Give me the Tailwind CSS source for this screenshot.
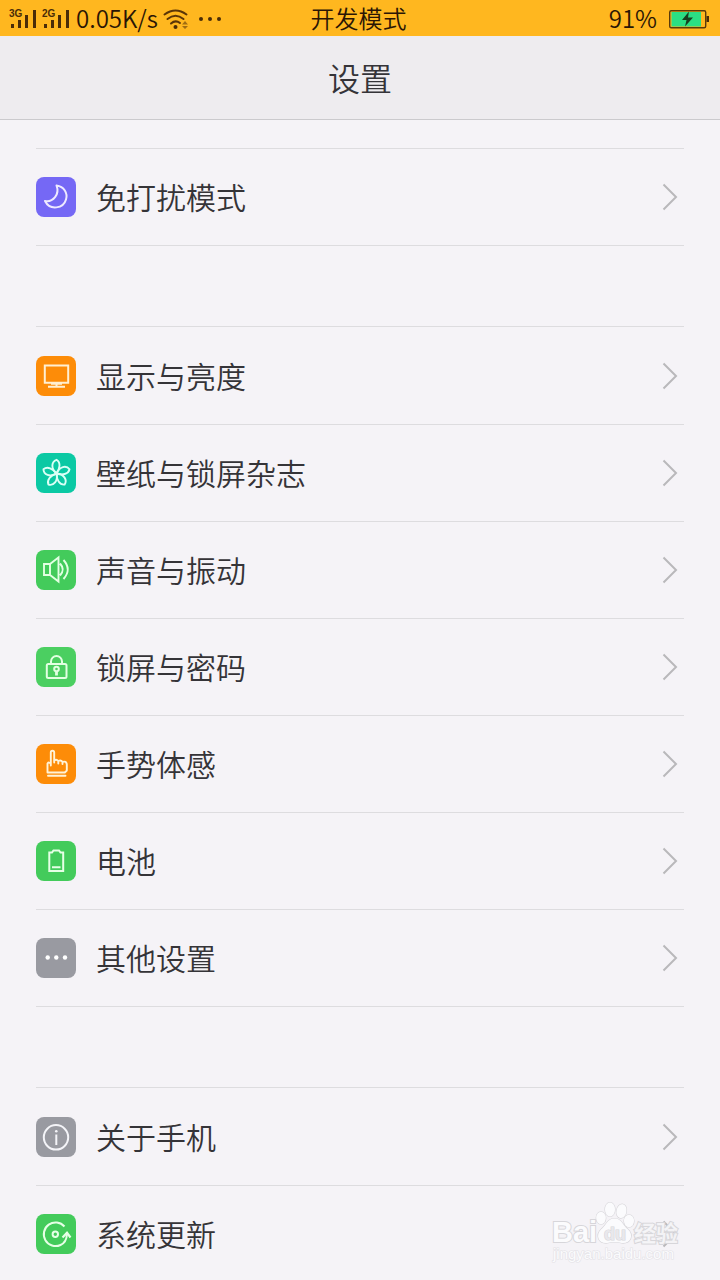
<!DOCTYPE html>
<html lang="zh-CN">
<head>
<meta charset="utf-8">
<meta name="viewport" content="width=device-width, initial-scale=1">
<title>设置</title>
<script src="https://cdn.jsdelivr.net/npm/@tailwindcss/browser@4"></script>
</head>
<body class="relative flex h-screen flex-col overflow-hidden bg-[#f5f3f7] font-['Noto_Sans_CJK_SC',sans-serif] font-[350] text-[#353438]">

<svg class="hidden">
  <symbol id="chevron" viewBox="0 0 16 28"><path d="M1.500 1.500L14 14L1.500 26.500" fill="none" stroke="#b9b8bb" stroke-width="2"/></symbol>
</svg>

<div class="grid h-9 shrink-0 grid-cols-3 items-center bg-[#ffb71f] pr-[11px] pl-2 text-2xl leading-9 text-[#2a1505]">
  <div class="flex items-center gap-1 whitespace-nowrap">
    <svg class="h-9 w-[62px] shrink-0" viewBox="8 0 62 36" fill="#4a2c08" role="img" aria-label="3G 2G">
      <g font-family="Liberation Sans, sans-serif" font-size="10" font-weight="700"><text x="9" y="16">3G</text><text x="42" y="16">2G</text></g>
      <path d="M11 23h3v4h-3zM18 19h3v8h-3zM25 14h3v13h-3zM33 9h3v18h-3zM44 23h3v4h-3zM51 19h3v8h-3zM58 14h3v13h-3zM66 9h3v18h-3z"/>
    </svg>
    <span class="ml-0.5 w-[83px] pb-0.5">0.05K/s</span>
    <svg class="h-9 w-[60px] shrink-0" viewBox="163 0 60 36" role="img" aria-label="Wi-Fi">
      <g fill="none" stroke="#5a3508" stroke-width="2" stroke-linecap="round"><path d="M164.500 13.500Q175.500 5.500 186.500 13.500"/><path d="M167.500 18Q175.500 11.500 183.500 18"/><path d="M171 22.500Q175.500 18.500 180 22"/></g>
      <circle cx="175.500" cy="26" r="2" fill="#4a2c08"/>
      <path d="M182 23.500l3-3.500 3 3.500zM182 25l3 3 3-3z" fill="#a06c12"/>
      <g fill="#4a2c08"><circle cx="201" cy="18" r="2"/><circle cx="210" cy="18" r="2"/><circle cx="219" cy="18" r="2"/></g>
    </svg>
  </div>
  <div class="pb-0.5 text-center">开发模式</div>
  <div class="flex items-center justify-end gap-3">
    <span class="pb-0.5">91%</span>
    <svg class="h-9 w-10" viewBox="669 0 40 36" role="img" aria-label="充电中">
      <rect x="669.700" y="9.700" width="36" height="17" rx="1.500" fill="none" stroke="#5a3a0a" stroke-width="1.400"/>
      <rect x="671.500" y="11" width="29.500" height="14.500" fill="#2bdf83"/>
      <path d="M706.500 15h2.500v6h-2.500z" fill="#4a2c08"/>
      <path d="M689 10.500l-7 8.500h4.500l-1.500 6.500 8-9h-5z" fill="#17401f"/>
    </svg>
  </div>
</div>

<header class="flex h-21 shrink-0 items-center justify-center border-b border-[#cbcacd] bg-[#eeecef]">
  <h1 class="pb-0.5 text-[32px] leading-12">设置</h1>
</header>

<main class="flex flex-col gap-20 px-9 pt-7 text-[30px] leading-12">
  <section class="border-t border-[#dddcdf]">
    <a href="#" class="flex h-[97px] items-center gap-5 border-b border-[#dddcdf]">
      <svg class="size-10 shrink-0 rounded-lg bg-[#7568f5]" viewBox="0 0 40 40" fill="none" stroke="#eeeaff" stroke-width="2" stroke-linejoin="round"><path d="M20.500 8.500C28 9.500 32 16 30 22.500C27.500 31.500 14 34 9 24C17 25.500 24 17.500 20.500 8.500Z"/></svg>
      <span class="grow pb-0.5">免打扰模式</span>
      <svg class="mr-1.5 h-7 w-4"><use href="#chevron"/></svg>
    </a>
  </section>

  <section class="border-t border-[#dddcdf] pt-px">
    <a href="#" class="flex h-[97px] items-center gap-5 border-b border-[#dddcdf]">
      <svg class="size-10 shrink-0 rounded-lg bg-[#fd8c08]" viewBox="0 0 40 40" fill="none" stroke="#ffefd2" stroke-width="2"><path d="M8.800 9.500h23.400v17.200H8.800zM20.500 27v3M15 27.800h11M12 30.700h17"/></svg>
      <span class="grow pb-0.5">显示与亮度</span>
      <svg class="mr-1.5 h-7 w-4"><use href="#chevron"/></svg>
    </a>
    <a href="#" class="flex h-[97px] items-center gap-5 border-b border-[#dddcdf]">
      <svg class="size-10 shrink-0 rounded-lg bg-[#0bc9a4]" viewBox="0 0 40 40" fill="none" stroke="#dcfff6" stroke-width="1.900" stroke-linejoin="round">
        <path id="petal" d="M20.500 20.500C14.500 15.500 15.500 8.500 20.500 6.800C25 9.500 24 15.500 20.500 20.500Z"/><use href="#petal" transform="rotate(72 20.500 20.500)"/><use href="#petal" transform="rotate(144 20.500 20.500)"/><use href="#petal" transform="rotate(216 20.500 20.500)"/><use href="#petal" transform="rotate(288 20.500 20.500)"/>
      </svg>
      <span class="grow pb-0.5">壁纸与锁屏杂志</span>
      <svg class="mr-1.5 h-7 w-4"><use href="#chevron"/></svg>
    </a>
    <a href="#" class="flex h-[97px] items-center gap-5 border-b border-[#dddcdf]">
      <svg class="size-10 shrink-0 rounded-lg bg-[#43cb5b]" viewBox="0 0 40 40" fill="none" stroke="#e2ffe2" stroke-width="1.900"><path d="M8 14h6v11H8zM14 14L22.500 7.500V31.500L14 25M24 13.500Q29.500 19.500 24 25.500M27.500 10Q36 19.500 27.500 29"/></svg>
      <span class="grow pb-0.5">声音与振动</span>
      <svg class="mr-1.5 h-7 w-4"><use href="#chevron"/></svg>
    </a>
    <a href="#" class="flex h-[97px] items-center gap-5 border-b border-[#dddcdf]">
      <svg class="size-10 shrink-0 rounded-lg bg-[#4bcf61]" viewBox="0 0 40 40" fill="none" stroke="#e2ffe2" stroke-width="2"><rect x="10.800" y="17" width="19.700" height="14" rx="1.500"/><path d="M15 17v-2.500a5.500 5.500 0 0 1 11 0V17"/><circle cx="20.500" cy="22" r="2.300"/><path d="M20.500 24v4.500" stroke-width="2.800"/></svg>
      <span class="grow pb-0.5">锁屏与密码</span>
      <svg class="mr-1.5 h-7 w-4"><use href="#chevron"/></svg>
    </a>
    <a href="#" class="flex h-[97px] items-center gap-5 border-b border-[#dddcdf]">
      <svg class="size-10 shrink-0 rounded-lg bg-[#fd8c08]" viewBox="0 0 40 40" fill="none" stroke="#fff3d8" stroke-width="1.900" stroke-linejoin="round" stroke-linecap="round"><path d="M14.800 20V8.500Q14.800 6.800 16.500 6.800Q18.200 6.800 18.200 8.500V18.500V16.500Q20.500 14.800 22.300 17V19.500V17Q24.800 15.500 26.500 17.800V20V18Q30.500 16.500 30.800 20.500V26.500L28.800 28.500H11.500V19.500Q13 17.500 14.800 19.800V21.500M12 31.700h17.500"/></svg>
      <span class="grow pb-0.5">手势体感</span>
      <svg class="mr-1.5 h-7 w-4"><use href="#chevron"/></svg>
    </a>
    <a href="#" class="flex h-[97px] items-center gap-5 border-b border-[#dddcdf]">
      <svg class="size-10 shrink-0 rounded-lg bg-[#43cb5b]" viewBox="0 0 40 40" fill="none" stroke="#e6ffe6" stroke-width="2"><path d="M13.300 11.500H16L17.500 9.500H23L24.500 11.500H27.200V30H13.300ZM16 26.300h8.500"/></svg>
      <span class="grow pb-0.5">电池</span>
      <svg class="mr-1.5 h-7 w-4"><use href="#chevron"/></svg>
    </a>
    <a href="#" class="flex h-[97px] items-center gap-5 border-b border-[#dddcdf]">
      <svg class="size-10 shrink-0 rounded-lg bg-[#999aa1]" viewBox="0 0 40 40" fill="#fff"><circle cx="11.700" cy="19.500" r="2.200"/><circle cx="20.300" cy="19.500" r="2.200"/><circle cx="29" cy="19.500" r="2.200"/></svg>
      <span class="grow pb-0.5">其他设置</span>
      <svg class="mr-1.5 h-7 w-4"><use href="#chevron"/></svg>
    </a>
  </section>

  <section class="border-t border-[#dddcdf] pt-px">
    <a href="#" class="flex h-[97px] items-center gap-5 border-b border-[#dddcdf]">
      <svg class="size-10 shrink-0 rounded-lg bg-[#999aa1]" viewBox="0 0 40 40" fill="none" stroke="#f4f4f8" stroke-width="2"><circle cx="20" cy="20.300" r="12.200"/><path d="M20.300 17.500V28"/><circle cx="20.300" cy="14.300" r="1.300" fill="#f4f4f8" stroke="none"/></svg>
      <span class="grow pb-0.5">关于手机</span>
      <svg class="mr-1.5 h-7 w-4"><use href="#chevron"/></svg>
    </a>
    <a href="#" class="flex h-24 items-center gap-5">
      <svg class="size-10 shrink-0 rounded-lg bg-[#43cb5b]" viewBox="0 0 40 40" fill="none" stroke="#e6ffe6" stroke-width="2"><path d="M28.500 12.500A11.800 11.800 0 1 0 24.500 31Q30.500 28.500 31 20"/><path d="M26.500 23.500L31 18.800L34.500 23.500" stroke-width="2.200"/><circle cx="19.300" cy="20.300" r="2.700"/></svg>
      <span class="grow pb-0.5">系统更新</span>
      <svg class="mr-1.5 h-7 w-4"><use href="#chevron"/></svg>
    </a>
  </section>
</main>

<svg class="pointer-events-none absolute right-9 bottom-3 h-[70px] w-[136px]" viewBox="548 1198 136 70" fill="#fbfbfd" stroke="#d7d6da" stroke-width="1.200" paint-order="stroke" role="img" aria-label="Baidu 经验">
  <g stroke-width="2"><text x="552" y="1242" font-family="Liberation Sans, sans-serif" font-size="29" font-weight="700">Bai</text>
  <text x="634" y="1241" font-family="Noto Sans CJK SC, sans-serif" font-size="22" font-weight="700" fill-opacity=".8">经验</text></g>
  <ellipse cx="601" cy="1218" rx="4.800" ry="6.200"/><ellipse cx="610" cy="1209.500" rx="5" ry="7"/><ellipse cx="621.500" cy="1211" rx="5" ry="7" transform="rotate(12 621 1211)"/><ellipse cx="629" cy="1221" rx="5" ry="6.200"/>
  <path d="M614.500 1218.500C607 1218.500 606 1226 601 1229.500C595.500 1235 598 1243.500 607 1243Q614.500 1241 622 1243C631 1243.500 634 1235 628 1229.500C623 1226 622 1218.500 614.500 1218.500Z"/>
  <text x="604" y="1240" font-family="Liberation Sans, sans-serif" font-size="18" font-weight="700" fill="#e9e8ec">du</text>
  <text x="553" y="1259" font-family="Liberation Sans, sans-serif" font-size="15" stroke="#e3e2e6">jingyan.baidu.com</text>
</svg>
</body>
</html>
